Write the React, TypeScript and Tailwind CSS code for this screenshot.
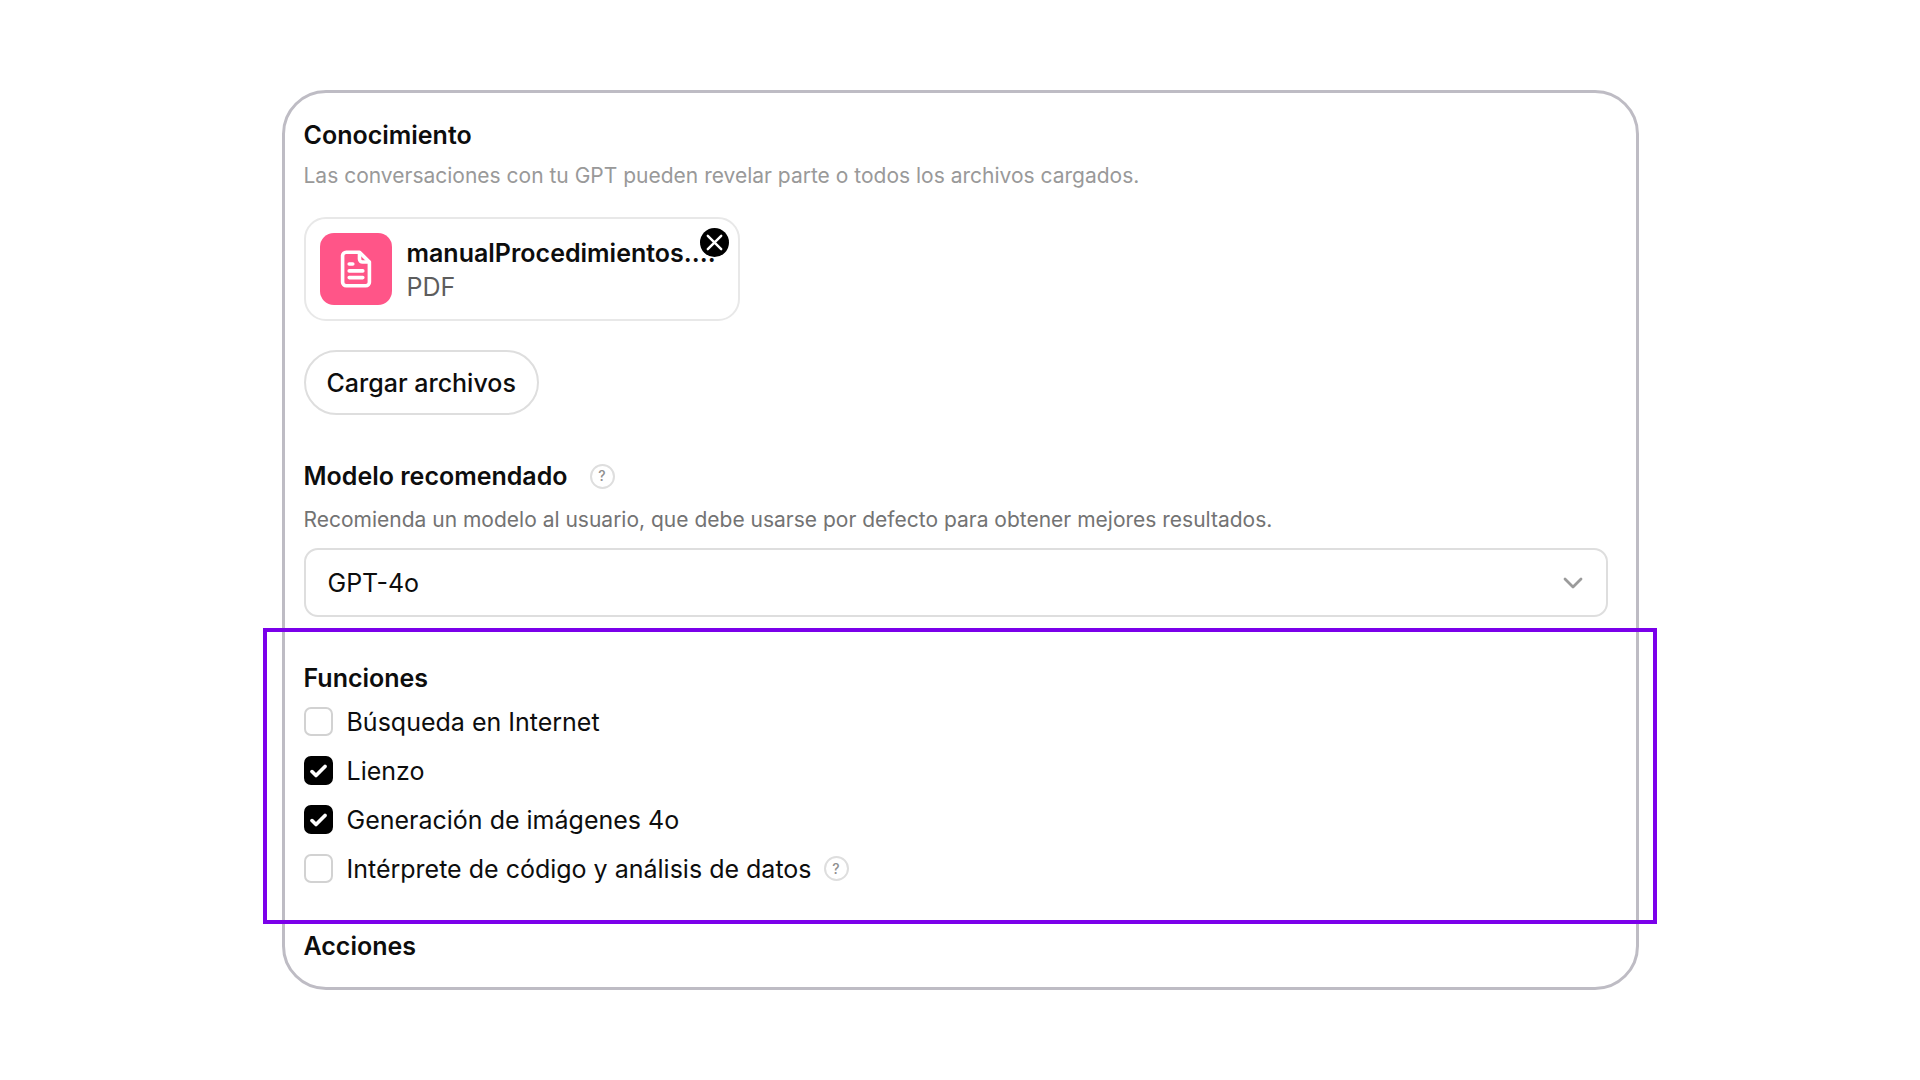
import { useState } from 'react';

const initialFeatures = [
  { id: 'search', label: 'Búsqueda en Internet', checked: false, help: false },
  { id: 'canvas', label: 'Lienzo', checked: true, help: false },
  { id: 'images', label: 'Generación de imágenes 4o', checked: true, help: false },
  { id: 'code', label: 'Intérprete de código y análisis de datos', checked: false, help: true },
];

function HelpButton() {
  return (
    <button
      type="button"
      className="flex size-[25px] shrink-0 items-center justify-center rounded-full border-2 border-[#dedede] text-sm leading-none font-medium text-[#8f8f8f]"
    >
      ?
    </button>
  );
}

export default function App() {
  const [features, setFeatures] = useState(initialFeatures);
  const [model, setModel] = useState('GPT-4o');

  const toggle = (id: string) =>
    setFeatures(features.map((f) => (f.id === id ? { ...f, checked: !f.checked } : f)));

  return (
    <main className="flex min-h-screen items-center justify-center bg-white px-12 font-['Inter',sans-serif] text-[#0d0d0d]">
      <div className="w-full max-w-[1357px] rounded-[44px] border-3 border-[#bebcc4] pt-[26px] pr-7 pb-[25px] pl-[19px]">

        {/* KNOWLEDGE */}
        <section>
          <h2 className="text-[25px] leading-8 font-semibold">Conocimiento</h2>
          <p className="mt-[9px] text-[21px] leading-8 text-[#999999]">
            Las conversaciones con tu GPT pueden revelar parte o todos los archivos cargados.
          </p>

          <div className="relative mt-[25px] flex w-[436px] items-center gap-[15px] rounded-[22px] border-2 border-[#e8e8e8] p-[14px]">
            <div className="flex size-[72px] shrink-0 items-center justify-center rounded-[14px] bg-[#ff5588]">
              <svg width="32" height="38" viewBox="0 0 32 38" fill="none" stroke="white" strokeWidth="3.6" strokeLinecap="round" strokeLinejoin="round">
                <path d="M19.5 2.2H6.2a3.6 3.6 0 0 0-3.6 3.6v26.4a3.6 3.6 0 0 0 3.6 3.6h19.6a3.6 3.6 0 0 0 3.6-3.6V12Z" />
                <path d="M19.5 2.7V9a3 3 0 0 0 3 3h6.4" />
                <path d="M9.2 14h3.6M9.2 20.9h13.6M9.2 27.6h13.6" />
              </svg>
            </div>
            <div className="whitespace-nowrap">
              <p className="text-[25px] leading-9 font-semibold">manualProcedimientos....</p>
              <p className="text-[25px] leading-8 text-[#5d5d5d]">PDF</p>
            </div>
            <button
              type="button"
              aria-label="Eliminar archivo"
              className="absolute top-[9px] right-[9px] flex size-[29px] items-center justify-center rounded-full bg-black"
            >
              <svg width="17" height="17" viewBox="0 0 17 17" stroke="white" strokeWidth="2.4" strokeLinecap="round">
                <path d="M1.8 1.8l13.4 13.4M15.2 1.8L1.8 15.2" />
              </svg>
            </button>
          </div>

          <button
            type="button"
            className="mt-[29px] flex h-[65px] items-center rounded-full border-2 border-[#dedede] px-[21px] text-[25px] leading-8 font-medium"
          >
            Cargar archivos
          </button>
        </section>

        {/* RECOMMENDED MODEL */}
        <section className="mt-[45px]">
          <div className="flex items-center gap-[22px]">
            <h2 className="text-[25px] leading-8 font-semibold">
              <label htmlFor="model">Modelo recomendado</label>
            </h2>
            <HelpButton />
          </div>
          <p className="mt-3 text-[21px] leading-8 text-[#737373]">
            Recomienda un modelo al usuario, que debe usarse por defecto para obtener mejores resultados.
          </p>
          <div className="mt-3 grid items-center">
            <select
              id="model"
              value={model}
              onChange={(e) => setModel(e.target.value)}
              className="col-start-1 row-start-1 h-[69px] w-full appearance-none rounded-[14px] border-2 border-[#dedede] bg-white px-[22px] pt-[2px] text-[25px]"
            >
              <option>GPT-4o</option>
            </select>
            <svg className="pointer-events-none col-start-1 row-start-1 mr-[25px] justify-self-end" width="20" height="12" viewBox="0 0 20 12" fill="none" stroke="#9b9b9b" strokeWidth="2.8" strokeLinecap="round" strokeLinejoin="round">
              <path d="M2 2l8 8 8-8" />
            </svg>
          </div>
        </section>

        {/* FEATURES */}
        <section className="mt-[11px] -mr-[49px] -ml-[41px] border-4 border-[#7b00ea] pt-[30px] pr-[45px] pb-[27px] pl-[37px]">
          <h2 className="text-[25px] leading-8 font-semibold">Funciones</h2>
          <ul className="mt-[3px]">
            {features.map((feature) => (
              <li key={feature.id} className="flex h-[49px] items-center gap-3">
                <label className="flex items-center gap-[14px] text-[25px] leading-8">
                  <span className="grid place-items-center">
                    <input
                      type="checkbox"
                      checked={feature.checked}
                      onChange={() => toggle(feature.id)}
                      className="col-start-1 row-start-1 size-[29px] appearance-none rounded-[7px] border-2 border-[#d2d2d2] checked:border-black checked:bg-black"
                    />
                    {feature.checked && (
                      <svg className="pointer-events-none col-start-1 row-start-1" width="17" height="14" viewBox="0 0 17 14" fill="none" stroke="white" strokeWidth="3.6" strokeLinecap="round" strokeLinejoin="round">
                        <path d="M2 7.6l4 4L15 2.4" />
                      </svg>
                    )}
                  </span>
                  {feature.label}
                </label>
                {feature.help && <HelpButton />}
              </li>
            ))}
          </ul>
        </section>

        {/* ACTIONS */}
        <h2 className="mt-[6px] text-[25px] leading-8 font-semibold">Acciones</h2>
      </div>
    </main>
  );
}
